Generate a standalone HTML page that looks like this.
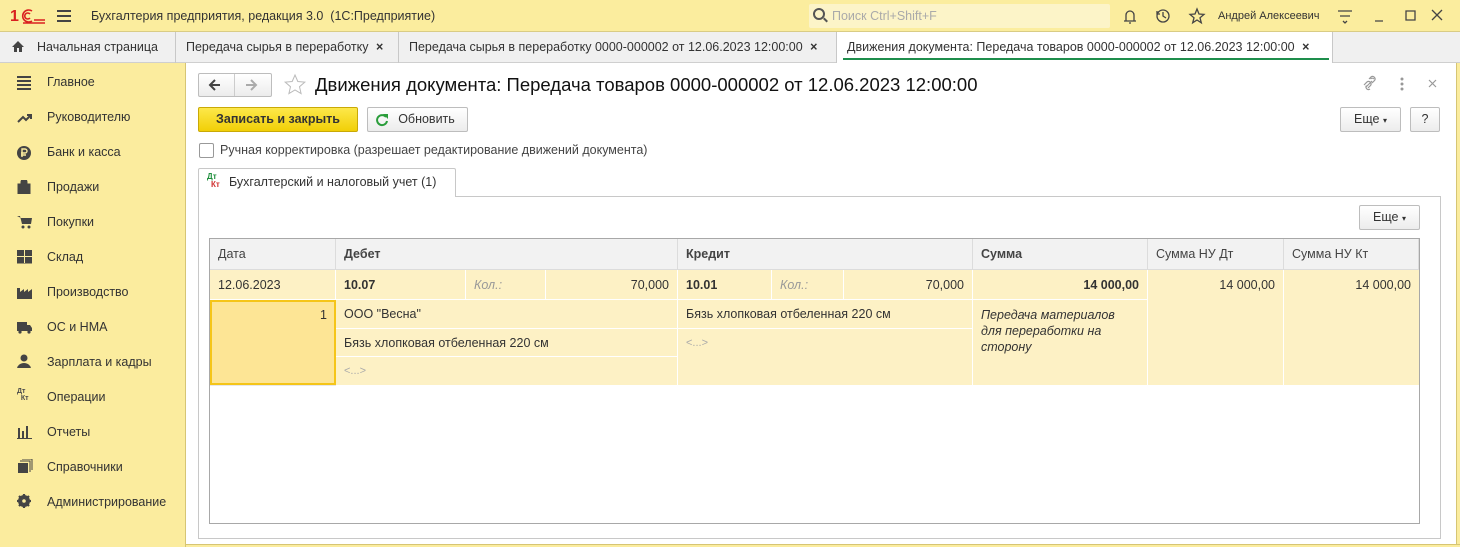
<!DOCTYPE html>
<html><head><meta charset="utf-8"><style>
*{box-sizing:border-box;margin:0;padding:0}
body{width:1460px;height:547px;overflow:hidden;background:#fff;font-family:"Liberation Sans",Arial,sans-serif;font-size:12px;color:#333;position:relative}
.a{position:absolute}
.top{left:0;top:0;width:1460px;height:32px;background:#fbed9e;border-bottom:1px solid #d9cc85}
.tabs{left:0;top:32px;width:1460px;height:31px;background:#f0f0f0;border-bottom:1px solid #cfcfcf}
.tab{top:0;height:31px;border-right:1px solid #c8c8c8;line-height:30px;font-size:12.5px;color:#333;padding-left:10px;white-space:nowrap}
.side{left:0;top:63px;width:186px;height:484px;background:#fbec9e;border-right:1px solid #d6c574}
.si{position:absolute;left:47px;font-size:12.5px;color:#333}
.ic{position:absolute;left:17px;width:16px;height:14px;color:#4a4a4a;font-size:12px;font-weight:bold}
.btn{border:1px solid #bdbdbd;border-radius:2px;background:linear-gradient(#fff,#ececec);font-size:12.5px;text-align:center}
.cell{position:absolute;border-right:1px solid #fff;border-bottom:1px solid #fff;padding:0 8px;white-space:nowrap;font-size:12.5px;color:#333}
.hd{position:absolute;top:239px;height:31px;background:#f2f2f2;border-right:1px solid #dcdcdc;border-bottom:1px solid #dcdcdc;line-height:30px;padding-left:8px;font-size:12.5px;color:#444}
</style></head><body>
<div class="a top"></div>
<svg class="a" style="left:10px;top:7px" width="36" height="18"><text x="0" y="14" font-family="Liberation Sans" font-weight="bold" font-size="16" fill="#d92020">1</text><path d="M22 4a6 6 0 1 0 0 10M20 7a3 3 0 1 0 0 4M13 16h22M24 13h11" stroke="#d92020" stroke-width="1.6" fill="none"/></svg>
<div class="a" style="left:57px;top:10px;width:14px;height:2px;background:#444;box-shadow:0 5px 0 #444,0 10px 0 #444"></div>
<div class="a" style="left:91px;top:9px;font-size:12.5px;color:#333">Бухгалтерия предприятия, редакция 3.0&nbsp; (1С:Предприятие)</div>
<div class="a" style="left:809px;top:4px;width:301px;height:24px;background:#fcf4c8;border-radius:2px"></div>
<div class="a" style="left:813px;top:8px;width:12px;height:12px;border:2px solid #555;border-radius:50%"></div>
<div class="a" style="left:823px;top:19px;width:5px;height:2px;background:#555;transform:rotate(45deg)"></div>
<div class="a" style="left:832px;top:9px;font-size:12.5px;color:#aaa">Поиск Ctrl+Shift+F</div>
<svg class="a" style="left:1120px;top:6px" width="330" height="20" fill="none" stroke="#444" stroke-width="1.3">
<path d="M4 15h12M6 15V9a4 4 0 0 1 8 0v6M9 17h2"/>
<circle cx="43" cy="10" r="6"/><path d="M43 6v4l3 2M37 5l0 3 3 0"/>
<path d="M77 3l2 5 5 .4-4 3.4 1.3 5L77 14l-4.3 2.8 1.3-5-4-3.4 5-.4z"/>
<path d="M218 5h14M220 10h10M223 15l2 2 2-2"/>
<path d="M255 15h8M286 5h9v9h-9zM312 4l10 10M322 4l-10 10"/>
</svg>
<div class="a" style="left:1218px;top:10px;font-size:11px;color:#333">Андрей Алексеевич</div>

<div class="a tabs">
<div class="a tab" style="left:0;width:176px;padding-left:37px">Начальная страница</div>
<div class="a tab" style="left:176px;width:223px;padding-left:10px">Передача сырья в переработку <b style="margin-left:4px">×</b></div>
<div class="a tab" style="left:399px;width:438px">Передача сырья в переработку 0000-000002 от 12.06.2023 12:00:00 <b style="margin-left:4px">×</b></div>
<div class="a tab" style="left:837px;width:496px;background:#fff">Движения документа: Передача товаров 0000-000002 от 12.06.2023 12:00:00 <b style="margin-left:4px">×</b></div>
<div class="a" style="left:843px;top:26px;width:486px;height:2px;background:#1e8e4c"></div>
<svg class="a" style="left:11px;top:8px" width="14" height="13"><path d="M7 1L1 7h2v5h3V8h2v4h3V7h2z" fill="#444"/></svg>
</div>

<div class="a side">
<div class="ic" style="top:13px"><div style="width:14px;height:2px;background:#444;box-shadow:0 4px 0 #444,0 8px 0 #444,0 12px 0 #444"></div></div><div class="si" style="top:12px">Главное</div>
<svg class="ic" style="top:48px" width="16" height="14"><path d="M1 11l5-5 3 3 5-5M10 4h4v4" stroke="#444" stroke-width="2" fill="none"/></svg><div class="si" style="top:47px">Руководителю</div>
<svg class="ic" style="top:83px" width="16" height="14"><circle cx="7" cy="7" r="7" fill="#444"/><path d="M5 11V3h3a2 2 0 0 1 0 4H4M4 9h5" stroke="#fbec9e" stroke-width="1.4" fill="none"/></svg><div class="si" style="top:82px">Банк и касса</div>
<svg class="ic" style="top:117px" width="16" height="15"><path d="M1 4h12v10H1zM4 4V2a3 3 0 0 1 6 0v2" fill="#444" stroke="#444"/></svg><div class="si" style="top:117px">Продажи</div>
<svg class="ic" style="top:152px" width="16" height="15"><path d="M0 1h3l2 8h9l1-6H4" fill="#444"/><circle cx="6" cy="12" r="1.5" fill="#444"/><circle cx="12" cy="12" r="1.5" fill="#444"/></svg><div class="si" style="top:152px">Покупки</div>
<svg class="ic" style="top:187px" width="16" height="15"><path d="M0 0h7v6H0zM8 0h7v6H8zM0 7h7v6H0zM8 7h7v6H8z" fill="#444"/><path d="M0 14h15" stroke="#444"/></svg><div class="si" style="top:187px">Склад</div>
<svg class="ic" style="top:222px" width="16" height="15"><path d="M0 14V3h3v4l4-3v3l4-3v3l4-3v10z" fill="#444"/></svg><div class="si" style="top:222px">Производство</div>
<svg class="ic" style="top:257px" width="16" height="15"><path d="M0 2h10v9H0zM10 5h3l2 3v3h-5z" fill="#444"/><circle cx="3" cy="12" r="1.6" fill="#444"/><circle cx="12" cy="12" r="1.6" fill="#444"/></svg><div class="si" style="top:257px">ОС и НМА</div>
<svg class="ic" style="top:291px" width="16" height="15"><circle cx="7" cy="4" r="3.5" fill="#444"/><path d="M0 15a7 6 0 0 1 14 0z" fill="#444"/></svg><div class="si" style="top:292px">Зарплата и кадры</div>
<div class="ic" style="top:325px;font-size:7px;line-height:7px">Дт<br>&nbsp;&nbsp;Кт</div><div class="si" style="top:327px">Операции</div>
<svg class="ic" style="top:362px" width="16" height="15"><path d="M1 3h2v10H1zM5 6h2v7H5zM9 1h2v12H9zM0 13h15v1H0z" fill="#444"/></svg><div class="si" style="top:362px">Отчеты</div>
<svg class="ic" style="top:396px" width="16" height="16"><path d="M1 4h10v11H1z" fill="#444"/><path d="M3 2h10v11M5 0h10v11" stroke="#444" fill="none"/></svg><div class="si" style="top:397px">Справочники</div>
<svg class="ic" style="top:431px" width="16" height="16"><circle cx="7" cy="7" r="4.5" fill="none" stroke="#444" stroke-width="3"/><path d="M7 0v14M0 7h14M2 2l10 10M12 2L2 12" stroke="#444" stroke-width="2.2"/><circle cx="7" cy="7" r="1.8" fill="#fbec9e"/></svg><div class="si" style="top:432px">Администрирование</div>
</div>

<div class="a btn" style="left:198px;top:73px;width:74px;height:24px"></div>
<div class="a" style="left:234px;top:74px;width:1px;height:22px;background:#ccc"></div>
<svg class="a" style="left:208px;top:78px" width="60" height="14"><path d="M2 7h10M7 2L2 7l5 5" stroke="#444" stroke-width="2" fill="none"/><path d="M38 7h10M43 2l5 5-5 5" stroke="#aaa" stroke-width="2" fill="none"/></svg>
<svg class="a" style="left:283px;top:73px" width="24" height="24"><path d="M12 2l2.8 6.5 7 .6-5.3 4.6 1.6 6.9L12 17l-6.1 3.6 1.6-6.9L2.2 9.1l7-.6z" fill="none" stroke="#bbb"/></svg>
<div class="a" style="left:315px;top:74px;font-size:18.5px;color:#111">Движения документа: Передача товаров 0000-000002 от 12.06.2023 12:00:00</div>
<svg class="a" style="left:1362px;top:75px" width="80" height="18" fill="none" stroke="#999" stroke-width="1.2"><path d="M4 12l6-6M2 10l3-3a2.5 2.5 0 0 1 3.5 3.5L6 13M12 4a2.5 2.5 0 0 0-3.5 0M8 14a2.5 2.5 0 0 1-3.5-3.5M7 4l2-2a2.5 2.5 0 0 1 3.5 3.5L10 8"/><circle cx="40" cy="4" r=".9" fill="#888"/><circle cx="40" cy="9" r=".9" fill="#888"/><circle cx="40" cy="14" r=".9" fill="#888"/><path d="M67 5l7 7M74 5l-7 7"/></svg>

<div class="a" style="left:198px;top:107px;width:160px;height:25px;background:linear-gradient(#fde84a,#f1cf07);border:1px solid #c9a906;border-radius:2px;font-size:12.5px;font-weight:bold;color:#333;text-align:center;line-height:23px">Записать и закрыть</div>
<div class="a btn" style="left:367px;top:107px;width:101px;height:25px;line-height:23px;padding-left:18px">Обновить</div>
<svg class="a" style="left:375px;top:113px" width="14" height="14"><path d="M11 4A5 5 0 1 0 12 8" stroke="#2a9d3b" stroke-width="2" fill="none"/><path d="M8 1h5v5z" fill="#2a9d3b"/></svg>
<div class="a btn" style="left:1340px;top:107px;width:61px;height:25px;line-height:23px">Еще <span style="font-size:8px">▾</span></div>
<div class="a btn" style="left:1410px;top:107px;width:30px;height:25px;line-height:23px">?</div>

<div class="a" style="left:199px;top:143px;width:15px;height:15px;border:1px solid #999;border-radius:2px;background:#fff"></div>
<div class="a" style="left:220px;top:143px;font-size:12.5px;color:#444">Ручная корректировка (разрешает редактирование движений документа)</div>

<div class="a" style="left:198px;top:196px;width:1243px;height:343px;border:1px solid #c8c8c8"></div>
<div class="a" style="left:198px;top:168px;width:258px;height:29px;border:1px solid #c8c8c8;border-bottom:none;background:#fff;border-radius:2px 2px 0 0"></div>
<div class="a" style="left:207px;top:173px;font-size:8px;line-height:8px;font-weight:bold"><span style="color:#1e8e3c">Дт</span><br><span style="color:#d03030;padding-left:4px">Кт</span></div>
<div class="a" style="left:229px;top:175px;font-size:12.5px;color:#333">Бухгалтерский и налоговый учет (1)</div>
<div class="a btn" style="left:1359px;top:205px;width:61px;height:25px;line-height:23px">Еще <span style="font-size:8px">▾</span></div>

<div class="a" style="left:209px;top:238px;width:1211px;height:286px;border:1px solid #a8a8a8"></div>
<div class="hd" style="left:210px;width:126px">Дата</div>
<div class="hd" style="left:336px;width:342px;font-weight:bold">Дебет</div>
<div class="hd" style="left:678px;width:295px;font-weight:bold">Кредит</div>
<div class="hd" style="left:973px;width:175px;font-weight:bold">Сумма</div>
<div class="hd" style="left:1148px;width:136px">Сумма НУ Дт</div>
<div class="hd" style="left:1284px;width:135px">Сумма НУ Кт</div>
<div class="a" style="left:210px;top:270px;width:1209px;height:116px;background:#fdf1c5;border-bottom:1px solid #e8e8e8"></div>
<div class="cell" style="left:210px;top:270px;width:126px;height:30px;line-height:30px">12.06.2023</div>
<div class="a" style="left:210px;top:300px;width:126px;height:85px;background:#fde595;border:2px solid #f5c518;text-align:right;padding:6px 7px 0 0;font-size:12.5px">1</div>
<div class="cell" style="left:336px;top:270px;width:130px;height:30px;line-height:30px;font-weight:bold">10.07</div>
<div class="cell" style="left:466px;top:270px;width:80px;height:30px;line-height:30px;font-style:italic;color:#999">Кол.:</div>
<div class="cell" style="left:546px;top:270px;width:132px;height:30px;line-height:30px;text-align:right">70,000</div>
<div class="cell" style="left:336px;top:300px;width:342px;height:29px;line-height:29px">ООО "Весна"</div>
<div class="cell" style="left:336px;top:329px;width:342px;height:28px;line-height:28px">Бязь хлопковая отбеленная 220 см</div>
<div class="cell" style="left:336px;top:357px;width:342px;height:29px;line-height:29px;color:#aaa;font-size:11px">&lt;...&gt;</div>
<div class="cell" style="left:678px;top:270px;width:94px;height:30px;line-height:30px;font-weight:bold">10.01</div>
<div class="cell" style="left:772px;top:270px;width:72px;height:30px;line-height:30px;font-style:italic;color:#999">Кол.:</div>
<div class="cell" style="left:844px;top:270px;width:129px;height:30px;line-height:30px;text-align:right">70,000</div>
<div class="cell" style="left:678px;top:300px;width:295px;height:29px;line-height:29px">Бязь хлопковая отбеленная 220 см</div>
<div class="cell" style="left:678px;top:329px;width:295px;height:57px;line-height:28px;color:#aaa;font-size:11px">&lt;...&gt;</div>
<div class="cell" style="left:973px;top:270px;width:175px;height:30px;line-height:30px;text-align:right;font-weight:bold">14 000,00</div>
<div class="cell" style="left:973px;top:300px;width:175px;height:86px;padding:7px 24px 0 8px;line-height:16px;font-style:italic;white-space:normal">Передача материалов для переработки на сторону</div>
<div class="cell" style="left:1148px;top:270px;width:136px;height:116px;line-height:30px;text-align:right">14 000,00</div>
<div class="cell" style="left:1284px;top:270px;width:135px;height:116px;line-height:30px;text-align:right;border-right:none">14 000,00</div>

<div class="a" style="left:1456px;top:63px;width:4px;height:484px;background:#fbec9e;border-left:1px solid #d6c574"></div>
<div class="a" style="left:186px;top:544px;width:1274px;height:3px;background:#fbec9e;border-top:1px solid #d6c574"></div>
</body></html>
